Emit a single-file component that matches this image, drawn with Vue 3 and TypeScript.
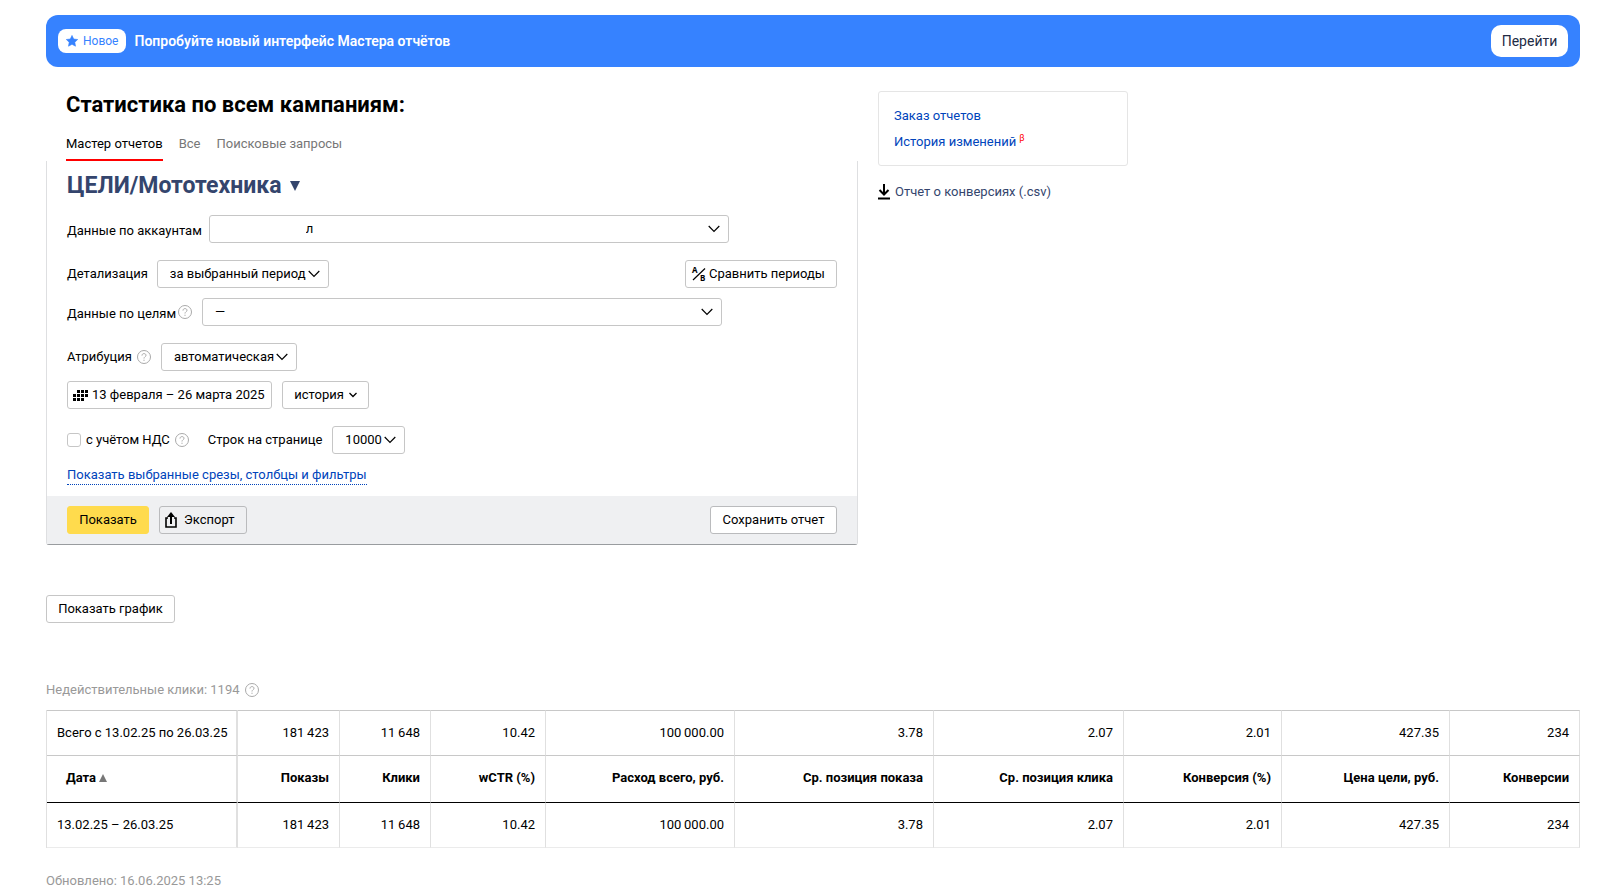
<script setup lang="ts">
interface Column {
  title: string
  width: number
  value: string
}

const tabs: string[] = ['Мастер отчетов', 'Все', 'Поисковые запросы']

const columns: Column[] = [
  { title: 'Показы', width: 102, value: '181\u2009423' },
  { title: 'Клики', width: 91, value: '11\u2009648' },
  { title: 'wCTR (%)', width: 115, value: '10.42' },
  { title: 'Расход всего, руб.', width: 189, value: '100\u2009000.00' },
  { title: 'Ср. позиция показа', width: 199, value: '3.78' },
  { title: 'Ср. позиция клика', width: 190, value: '2.07' },
  { title: 'Конверсия (%)', width: 158, value: '2.01' },
  { title: 'Цена цели, руб.', width: 168, value: '427.35' },
  { title: 'Конверсии', width: 130, value: '234' },
]
</script>

<template>
  <div class="page">
    <section class="banner">
      <span class="badge">
        <svg width="12" height="12" viewBox="0 0 12 12" aria-hidden="true">
          <path d="M6 .4 7.7 4l4 .5-2.9 2.7.7 4L6 9.3l-3.500 1.900.7-4L.3 4.500l4-.5z" fill="#3682ff" stroke="#3682ff" stroke-width=".6" stroke-linejoin="round" />
        </svg>
        Новое
      </span>
      <strong class="banner-text">Попробуйте новый интерфейс Мастера отчётов</strong>
      <button class="banner-go" type="button">Перейти</button>
    </section>

    <div class="columns">
      <main class="main">
        <h1>Статистика по всем кампаниям:</h1>
        <nav class="tabs">
          <a v-for="(tab, i) in tabs" :key="tab" href="#" :class="['tab', { active: i === 0 }]">{{ tab }}</a>
        </nav>

        <form class="card" @submit.prevent>
          <div class="card-body">
            <h2>ЦЕЛИ/Мототехника
              <svg width="10" height="10" viewBox="0 0 10 10" aria-hidden="true"><path d="M0 0h10L5 10z" fill="#34456d" /></svg>
            </h2>

            <div class="row accounts">
              <label for="accounts">Данные по аккаунтам</label>
              <span class="select wide">
                <select id="accounts"><option>л</option></select>
                <svg width="12" height="8" viewBox="0 0 12 8"><path d="m.7 1 5.300 5.300L11.300 1" /></svg>
              </span>
            </div>

            <div class="row detail">
              <label for="detail">Детализация</label>
              <span class="select period">
                <select id="detail"><option>за выбранный период</option></select>
                <svg width="12" height="8" viewBox="0 0 12 8"><path d="m.7 1 5.300 5.300L11.300 1" /></svg>
              </span>
              <button class="btn compare" type="button">
                <svg width="14" height="14" viewBox="0 0 14 14" aria-hidden="true">
                  <path d="M1 13 13 1.500" stroke="#000" stroke-width="1.200" fill="none" />
                  <text x="0" y="6" class="ab">A</text>
                  <text x="8" y="14" class="ab">B</text>
                </svg>
                Сравнить периоды
              </button>
            </div>

            <div class="row goals">
              <label for="goals">Данные по целям</label>
              <svg class="help" width="14" height="14" viewBox="0 0 14 14"><circle cx="7" cy="7" r="6.500" /><path d="M5 5.600C5 4.300 5.800 3.600 7 3.600s2 .7 2 1.700c0 1.400-2 1.500-2 3.200M7 9.700v1.200" /></svg>
              <span class="select wide">
                <select id="goals"><option>—</option></select>
                <svg width="12" height="8" viewBox="0 0 12 8"><path d="m.7 1 5.300 5.300L11.300 1" /></svg>
              </span>
            </div>

            <div class="row attribution">
              <label for="attribution">Атрибуция</label>
              <svg class="help" width="14" height="14" viewBox="0 0 14 14"><circle cx="7" cy="7" r="6.500" /><path d="M5 5.600C5 4.300 5.800 3.600 7 3.600s2 .7 2 1.700c0 1.400-2 1.500-2 3.200M7 9.700v1.200" /></svg>
              <span class="select auto">
                <select id="attribution"><option>автоматическая</option></select>
                <svg width="12" height="8" viewBox="0 0 12 8"><path d="m.7 1 5.300 5.300L11.300 1" /></svg>
              </span>
            </div>

            <div class="row dates">
              <button class="btn calendar" type="button">
                <svg width="15" height="11" viewBox="0 0 15 11" aria-hidden="true">
                  <path d="M4 0h3v3H4zM8 0h3v3H8zM12 0h3v3h-3zM0 4h3v3H0zM4 4h3v3H4zM8 4h3v3H8zM12 4h3v3h-3zM0 8h3v3H0zM4 8h3v3H4zM8 8h3v3H8z" />
                </svg>
                13 февраля – 26 марта 2025
              </button>
              <button class="btn history" type="button">
                история
                <svg width="8" height="6" viewBox="0 0 8 6" aria-hidden="true"><path d="m.5 1 3.500 3.500L7.500 1" fill="none" stroke="#000" stroke-width="1.300" /></svg>
              </button>
            </div>

            <div class="row options">
              <input id="vat" type="checkbox" />
              <label for="vat">с учётом НДС</label>
              <svg class="help" width="14" height="14" viewBox="0 0 14 14"><circle cx="7" cy="7" r="6.500" /><path d="M5 5.600C5 4.300 5.800 3.600 7 3.600s2 .7 2 1.700c0 1.400-2 1.500-2 3.200M7 9.700v1.200" /></svg>
              <label class="rows-label" for="rows">Строк на странице</label>
              <span class="select rows">
                <select id="rows"><option>10000</option></select>
                <svg width="12" height="8" viewBox="0 0 12 8"><path d="m.7 1 5.300 5.300L11.300 1" /></svg>
              </span>
            </div>

            <a class="filters" href="#">Показать выбранные срезы, столбцы и фильтры</a>
          </div>

          <footer class="card-foot">
            <button class="btn primary" type="submit">Показать</button>
            <button class="btn export" type="button">
              <svg width="12" height="16" viewBox="0 0 12 16" aria-hidden="true">
                <path d="M6 12V3" fill="none" stroke="#000" stroke-width="2" /><path d="M3 6H1v9h10V6H9" fill="none" stroke="#000" stroke-width="1.600" /><path d="M6 0 2 5h8z" />
              </svg>
              Экспорт
            </button>
            <button class="btn save" type="button">Сохранить отчет</button>
          </footer>
        </form>
      </main>

      <aside class="side">
        <nav class="side-box">
          <a href="#">Заказ отчетов</a>
          <a href="#">История изменений<sup>β</sup></a>
        </nav>
        <a class="csv" href="#">
          <svg width="12" height="16" viewBox="0 0 12 16" aria-hidden="true"><path d="M6 0v10M1.500 6 6 10.500 10.500 6M0 14.500h12" fill="none" stroke="#000" stroke-width="2" /></svg>
          Отчет о конверсиях (.csv)
        </a>
      </aside>
    </div>

    <button class="btn chart" type="button">Показать график</button>

    <p class="invalid">
      Недействительные клики: 1194
      <svg class="help" width="14" height="14" viewBox="0 0 14 14"><circle cx="7" cy="7" r="6.500" /><path d="M5 5.600C5 4.300 5.800 3.600 7 3.600s2 .7 2 1.700c0 1.400-2 1.500-2 3.200M7 9.700v1.200" /></svg>
    </p>

    <table>
      <colgroup>
        <col class="date-col" />
        <col v-for="c in columns" :key="c.title" :style="{ width: c.width + 'px' }" />
      </colgroup>
      <thead>
        <tr class="total">
          <td>Всего с 13.02.25 по 26.03.25</td>
          <td v-for="c in columns" :key="c.title">{{ c.value }}</td>
        </tr>
        <tr class="heads">
          <th scope="col">Дата <svg width="8" height="8" viewBox="0 0 8 8" aria-hidden="true"><path d="M4 0 8 8H0z" fill="#777" /></svg></th>
          <th v-for="c in columns" :key="c.title" scope="col">{{ c.title }}</th>
        </tr>
      </thead>
      <tbody>
        <tr>
          <td>13.02.25 – 26.03.25</td>
          <td v-for="c in columns" :key="c.title">{{ c.value }}</td>
        </tr>
      </tbody>
    </table>

    <p class="updated">Обновлено: 16.06.2025 13:25</p>
  </div>
</template>

<style>
body {
  margin: 0;
  background: #fff;
}
</style>

<style scoped>
.page {
  padding: 15px 40px 0 46px;
  font: 13px/18px Roboto, "Noto Sans", sans-serif;
  color: #000;
}
.page * {
  box-sizing: border-box;
}
svg {
  flex: none;
  overflow: visible;
}
a {
  color: #04b;
  text-decoration: none;
}
button,
select,
input {
  font: inherit;
  color: inherit;
  margin: 0;
}
p,
h1,
h2 {
  margin: 0;
}

.banner {
  display: flex;
  align-items: center;
  height: 52px;
  padding: 0 12px;
  border-radius: 12px;
  background: #3682ff;
}
.badge {
  display: flex;
  align-items: center;
  gap: 5px;
  height: 24px;
  padding: 0 8px;
  border-radius: 8px;
  background: #fff;
  color: #3682ff;
  font-size: 12px;
}
.banner-text {
  flex: 1;
  margin-left: 8px;
  color: #fff;
  font-size: 14px;
  font-weight: 600;
}
.banner-go {
  width: 77px;
  height: 32px;
  padding: 0;
  border: 0;
  border-radius: 10px;
  background: #fff;
  color: #222b45;
  font-size: 14px;
}

.columns {
  display: flex;
  align-items: flex-start;
  gap: 20px;
}
.main {
  width: 812px;
  padding-top: 23px;
}
h1 {
  padding-left: 20px;
  font-size: 22px;
  line-height: 30px;
  font-weight: 700;
}
.tabs {
  display: flex;
  gap: 16px;
  padding: 15px 20px 0;
}
.tab {
  padding-bottom: 6px;
  border-bottom: 2px solid transparent;
  line-height: 18px;
  color: #777;
}
.tab.active {
  border-color: #f00;
  color: #000;
}

.card {
  border: 1px solid #dedfe1;
  border-top: 0;
  border-bottom-color: #999c9f;
  border-radius: 0 0 3px 3px;
}
.card-body {
  padding: 9px 20px 11px;
}
h2 {
  display: flex;
  align-items: center;
  gap: 9px;
  height: 32px;
  font-size: 23px;
  line-height: 32px;
  font-weight: 700;
  color: #34456d;
}
.row {
  display: flex;
  align-items: center;
  height: 28px;
}
.accounts {
  gap: 7px;
  margin-top: 13px;
}
.accounts label,
.goals label {
  padding-top: 4px;
}
.detail {
  gap: 9px;
  margin-top: 17px;
}
.goals {
  margin-top: 10px;
}
.attribution {
  margin-top: 17px;
}
.dates {
  gap: 10px;
  margin-top: 10px;
}
.options {
  margin-top: 17px;
}
.help {
  flex: none;
  margin-left: 5px;
  fill: none;
  stroke: #aaa;
  stroke-width: 1;
}
.goals .help {
  margin-left: 2px;
}
.help + .select {
  margin-left: 10px;
}

.btn {
  display: inline-flex;
  align-items: center;
  justify-content: center;
  height: 28px;
  padding: 0 12px;
  border: 1px solid #c6c6c6;
  border-radius: 3px;
  background: #fff;
  white-space: nowrap;
}
.select {
  position: relative;
  flex: none;
}
.select select {
  display: block;
  appearance: none;
  width: 100%;
  height: 28px;
  padding: 0 12px;
  border: 1px solid #c6c6c6;
  border-radius: 3px;
  background: #fff;
}
.select svg {
  position: absolute;
  right: 9px;
  top: 10px;
  fill: none;
  stroke: #000;
  stroke-width: 1.2;
  pointer-events: none;
}
.wide {
  width: 520px;
}
#accounts {
  padding-left: 96px;
}
.period {
  width: 172px;
}
.auto {
  width: 136px;
}
.rows {
  width: 73px;
}
.compare {
  gap: 3px;
  width: 152px;
  margin-left: auto;
  padding: 0 6px;
  justify-content: flex-start;
}
.ab {
  font: 700 8px "Noto Sans", sans-serif;
}
.calendar {
  gap: 4px;
  width: 205px;
  padding: 0 5px;
  justify-content: flex-start;
}
.history {
  gap: 5px;
  width: 87px;
  padding: 0 6px;
}
input[type="checkbox"] {
  appearance: none;
  width: 14px;
  height: 14px;
  margin-right: 5px;
  border: 1px solid #c6c6c6;
  border-radius: 3px;
  background: #fff;
}
.rows-label {
  margin: 0 10px 0 19px;
}
.filters {
  display: inline-block;
  margin-top: 12px;
  border-bottom: 1px dotted #04b;
}

.card-foot {
  display: flex;
  gap: 10px;
  padding: 10px 20px;
  background: #eff0f2;
}
.primary {
  width: 82px;
  border-color: #ffdb4d;
  background: #ffdb4d;
}
.export {
  gap: 7px;
  width: 88px;
  padding: 0 5px;
  justify-content: flex-start;
  background: transparent;
  border-color: #babbbd;
}
.save {
  width: 127px;
  margin-left: auto;
  border-color: #babbbd;
}

.side {
  width: 250px;
  padding-top: 24px;
}
.side-box {
  display: flex;
  flex-direction: column;
  gap: 8px;
  height: 75px;
  padding: 15px 15px 0;
  border: 1px solid #e5e5e5;
  border-radius: 3px;
}
sup {
  margin-left: 3px;
  color: #f00;
  font-size: 9px;
  line-height: 0;
}
.csv {
  display: flex;
  align-items: center;
  gap: 5px;
  margin-top: 17px;
  color: #34456d;
}

.chart {
  width: 129px;
  margin-top: 50px;
}
.invalid {
  display: flex;
  align-items: center;
  margin-top: 58px;
  color: #999;
}

table {
  width: 100%;
  margin-top: 11px;
  table-layout: fixed;
  border-collapse: separate;
  border-spacing: 0;
  border-left: 1px solid #e0e0e0;
}
.date-col {
  width: 191px;
}
td,
th {
  padding: 0 10px;
  border-right: 1px solid #e0e0e0;
  text-align: right;
  white-space: nowrap;
}
td:first-child,
th:first-child {
  border-right-width: 2px;
  text-align: left;
}
th:first-child {
  padding-left: 19px;
}
.total td {
  height: 46px;
  border-top: 1px solid #c8c8c8;
  border-bottom: 1px solid #c8c8c8;
}
.heads th {
  height: 47px;
  padding-bottom: 2px;
  border-bottom: 1px solid #000;
}
tbody td {
  height: 45px;
  border-bottom: 1px solid #ebebeb;
}
.updated {
  margin-top: 24px;
  color: #999;
}
</style>
